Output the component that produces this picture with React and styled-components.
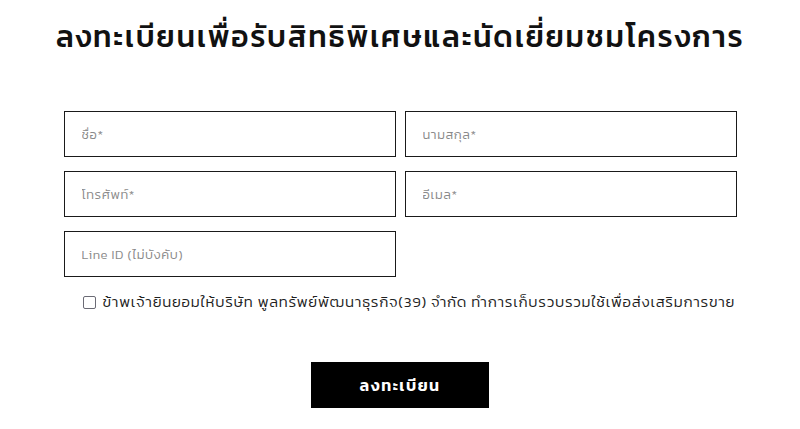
import React from "react";
import styled, { createGlobalStyle } from "styled-components";

const Global = createGlobalStyle`
  html, body { margin: 0; padding: 0; background: #fff; }
  body { font-family: "Kanit", "Noto Sans Thai", sans-serif; color: #111; }
  * { box-sizing: border-box; }
`;

const Page = styled.div`
  width: 800px;
  height: 429px;
  display: flex;
  flex-direction: column;
  align-items: center;
  padding-top: 16px;
`;

const Title = styled.h1`
  margin: 0;
  font-size: 30px;
  font-weight: 500;
  line-height: 42px;
  letter-spacing: 1.75px;
  color: #111;
  text-align: center;
  white-space: nowrap;
`;

const Form = styled.form`
  width: 673px;
  margin-top: 53px;
  display: grid;
  grid-template-columns: 1fr 1fr;
  column-gap: 9px;
  row-gap: 14px;
`;

const Input = styled.input`
  height: 46px;
  width: 100%;
  border: 1px solid #1a1a1a;
  padding: 0 17px;
  font-family: inherit;
  font-size: 13px;
  font-weight: 300;
  letter-spacing: 0.6px;
  color: #333;
  outline: none;
  &::placeholder { color: #8a8a8a; }
`;

const CheckRow = styled.label`
  grid-column: 1 / 3;
  display: flex;
  align-items: center;
  gap: 7px;
  padding-left: 19px;
  padding-top: 1px;
  font-size: 15px;
  line-height: 20px;
  font-weight: 300;
  letter-spacing: 0.75px;
  color: #222;
  white-space: nowrap;
`;

const Box = styled.span`
  width: 13px;
  height: 13px;
  border: 1.5px solid #6b6b75;
  border-radius: 2px;
  flex: none;
`;

const Submit = styled.button`
  grid-column: 1 / 3;
  justify-self: center;
  width: 178px;
  height: 46px;
  margin-top: 36px;
  background: #000;
  color: #fff;
  border: none;
  font-family: inherit;
  font-size: 16px;
  font-weight: 600;
  letter-spacing: 1.5px;
`;

export default function App() {
  return (
    <Page>
      <Global />
      <Title>ลงทะเบียนเพื่อรับสิทธิพิเศษและนัดเยี่ยมชมโครงการ</Title>
      <Form onSubmit={(e) => e.preventDefault()}>
        <Input placeholder="ชื่อ*" />
        <Input placeholder="นามสกุล*" />
        <Input placeholder="โทรศัพท์*" />
        <Input placeholder="อีเมล*" />
        <Input placeholder="Line ID (ไม่บังคับ)" />
        <div />
        <CheckRow>
          <Box />
          ข้าพเจ้ายินยอมให้บริษัท พูลทรัพย์พัฒนาธุรกิจ(39) จำกัด ทำการเก็บรวบรวมใช้เพื่อส่งเสริมการขาย
        </CheckRow>
        <Submit type="submit">ลงทะเบียน</Submit>
      </Form>
    </Page>
  );
}
